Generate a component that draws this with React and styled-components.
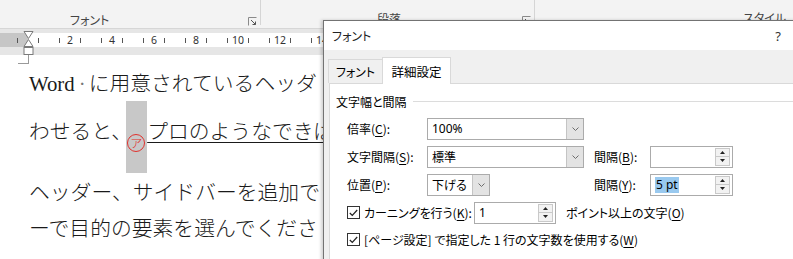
import React from 'react'
import styled, { createGlobalStyle, css } from 'styled-components'

const UI_FONT = `"Noto Sans CJK JP", "Noto Sans", sans-serif`

const GlobalStyle = createGlobalStyle`
  html, body {
    margin: 0;
    padding: 0;
    background: #fff;
  }
  body {
    width: 793px;
    height: 259px;
    overflow: hidden;
  }
`

const Screen = styled.div`
  position: relative;
  width: 793px;
  height: 259px;
  overflow: hidden;
  font-family: ${UI_FONT};
`

/* ---------- ribbon ---------- */

const Ribbon = styled.div`
  display: flex;
  height: 29px;
  box-sizing: border-box;
  background: #f3f3f3;
  border-bottom: 1px solid #d6d6d6;
`

const RibbonGroup = styled.div`
  display: flex;
  flex-direction: column;
  width: ${({ $w }) => ($w ? `${$w}px` : 'auto')};
  flex: ${({ $w }) => ($w ? 'none' : '1')};
  height: 25px;
  box-sizing: border-box;
  border-right: ${({ $last }) => ($last ? 'none' : '1px solid #d5d5d5')};
`

const Gallery = styled.div`
  height: 1px;
  margin-left: 9px;
  background: #c9c9c9;
`

const GroupFoot = styled.div`
  display: flex;
  align-items: center;
  margin-top: ${({ $top }) => $top}px;
  padding-left: ${({ $left }) => $left}px;
  padding-right: 3px;
  font-size: 12px;
  line-height: 16px;
  color: #444;
  font-feature-settings: "palt";
`

const Launcher = styled.svg`
  margin-left: auto;
  margin-top: 2px;
`

const DialogLauncher = () => (
  <Launcher width="9" height="9" viewBox="0 0 9 9">
    <path d="M0.5 8.5V0.5H8.5" fill="none" stroke="#8a8a8a" />
    <path d="M3 3L7.5 7.5M7.5 4.5V7.5H4.5" fill="none" stroke="#555" />
  </Launcher>
)

/* ---------- ruler ---------- */

const Ruler = styled.div`
  position: relative;
  height: 26px;
  padding-top: 4px;
  box-sizing: border-box;
  background: #e6e6e6;
`

const RulerStrip = styled.div`
  display: flex;
  height: 14px;
  padding-left: 1.75px;
  background: linear-gradient(to right, #c6c6c6 28px, #fff 28px);
`

const RulerCell = styled.div`
  flex: none;
  width: 10.5px;
  display: flex;
  align-items: center;
  justify-content: center;
  font-family: "Noto Sans", sans-serif;
  font-size: 10.5px;
  line-height: 14px;
  color: #333;
  white-space: nowrap;
`

const Tick = styled.span`
  display: block;
  width: 1px;
  height: 5px;
  background: #555;
`

const IndentMarker = styled.svg`
  position: absolute;
  left: 23px;
  top: 2px;
`

const rulerCells = Array.from({ length: 32 }, (_, i) => i - 2)

/* ---------- page ---------- */

const Page = styled.div`
  position: relative;
  z-index: 0;
  padding-left: 29px;
  font-family: "Liberation Serif", "Noto Sans CJK JP", serif;
  font-size: 20.8px;
  font-weight: 300;
  color: #1a1a1a;
`

const CropMark = styled.div`
  width: 10px;
  height: 8px;
  margin-left: -11px;
  border-right: 1px solid #9a9a9a;
  border-bottom: 1px solid #9a9a9a;
`

const TextLine = styled.div`
  height: 24px;
  line-height: 24px;
  margin-top: ${({ $top }) => $top}px;
  white-space: nowrap;
`

const SpaceMark = styled.span`
  color: #777;
  padding: 0 3px 0 4px;
`

const Marker = styled.span`
  position: relative;
  display: inline-block;
  width: 21px;
  height: 24px;
  margin-left: -6px;
  vertical-align: top;

  &::before {
    content: '';
    position: absolute;
    left: 0;
    right: 0;
    top: -19px;
    height: 72px;
    background: #c8c8c8;
    z-index: -1;
  }
`

const Circled = styled.span`
  position: absolute;
  left: 1px;
  top: 14px;
  width: 16px;
  height: 16px;
  border: 1px solid #e0312d;
  border-radius: 50%;
  display: flex;
  align-items: center;
  justify-content: center;
  color: #e0312d;
  font-family: ${UI_FONT};
  font-size: 12px;
  line-height: 1;
`

const Underlined = styled.span`
  text-decoration: underline;
  text-decoration-thickness: 1px;
  text-underline-offset: 3px;
`

/* ---------- dialog ---------- */

const Dialog = styled.div`
  position: absolute;
  left: 323px;
  top: 20px;
  z-index: 2;
  width: 490px;
  height: 260px;
  display: flex;
  flex-direction: column;
  background: #f0f0f0;
  border: 1px solid #737373;
  box-shadow: -2px 0 3px rgba(0, 0, 0, 0.18);
  font-size: 12px;
  font-feature-settings: "palt";
  color: #000;
`

const TitleBar = styled.div`
  display: flex;
  align-items: center;
  justify-content: space-between;
  height: 29px;
  padding: 0 33px 0 8px;
  background: #fff;
  font-size: 12px;
  color: #222;
`

const HelpMark = styled.span`
  font-family: "Noto Sans", sans-serif;
  font-size: 13px;
  color: #333;
`

const TabRow = styled.div`
  position: relative;
  z-index: 1;
  display: flex;
  align-items: flex-end;
  height: 34px;
  padding-left: 4px;
  margin-bottom: -1px;
`

const Tab = styled.div`
  display: flex;
  align-items: center;
  justify-content: center;
  box-sizing: border-box;
  border: 1px solid #d9d9d9;
  border-bottom: none;
  ${({ $active }) =>
    $active
      ? css`
          width: 69px;
          height: 27px;
          background: #fff;
          font-size: 12.5px;
        `
      : css`
          width: 54px;
          height: 24px;
          margin-bottom: 1px;
          border-right: none;
          background: #f0f0f0;
        `}
`

const Panel = styled.div`
  flex: 1;
  margin-left: 5px;
  padding-left: 6px;
  background: #fff;
  border: 1px solid #d9d9d9;
  border-right: none;
`

const GroupHeader = styled.div`
  display: flex;
  align-items: center;
  height: 16px;
  margin-top: 9px;

  &::after {
    content: '';
    flex: 1;
    height: 1px;
    margin-left: 6px;
    background: #dcdcdc;
  }
`

const Row = styled.div`
  display: flex;
  align-items: center;
  height: 23px;
  margin-left: 11px;
  margin-top: ${({ $top }) => $top}px;
  white-space: nowrap;
`

const Label = styled.span`
  flex: none;
  width: ${({ $w }) => ($w ? `${$w}px` : 'auto')};
  margin-left: ${({ $ml }) => $ml || 0}px;
`

const Key = styled.span`
  text-decoration: underline;
  text-underline-offset: 2px;
`

const FieldBox = styled.div`
  flex: none;
  display: flex;
  align-items: stretch;
  width: ${({ $w }) => $w}px;
  height: 22px;
  box-sizing: border-box;
  border: 1px solid #ababab;
  background: #fff;
`

const FieldText = styled.span`
  flex: 1;
  display: flex;
  align-items: center;
  padding-left: 4px;
  font-family: "Noto Sans", "Noto Sans CJK JP", sans-serif;
  font-size: 12px;
`

const DropButton = styled.span`
  width: 16px;
  display: flex;
  align-items: center;
  justify-content: center;
  background: #e3e3e3;
  border-left: 1px solid #c4c4c4;
`

const Spinner = styled.span`
  display: flex;
  flex-direction: column;
  justify-content: center;
  width: 15px;
  margin: 1px 2px 1px 0;
`

const SpinHalf = styled.span`
  display: flex;
  align-items: center;
  justify-content: center;
  height: 9px;
  background: #f2f2f2;
  border: 1px solid #c9c9c9;

  & + & {
    border-top: none;
  }
`

const Selected = styled.span`
  background: #99c9ef;
  padding: 1px 1px;
  line-height: 14px;
`

const Check = styled.span`
  flex: none;
  display: flex;
  align-items: center;
  justify-content: center;
  width: 13px;
  height: 13px;
  box-sizing: border-box;
  margin-right: 4px;
  border: 1px solid #333;
  background: #fff;
`

const Chevron = () => (
  <svg width="7" height="4" viewBox="0 0 7 4">
    <path d="M0.5 0.5L3.5 3.5L6.5 0.5" fill="none" stroke="#6d6d6d" />
  </svg>
)

const ComboBox = ({ width, value }) => (
  <FieldBox $w={width}>
    <FieldText>{value}</FieldText>
    <DropButton>
      <Chevron />
    </DropButton>
  </FieldBox>
)

const SpinBox = ({ width, children }) => (
  <FieldBox $w={width}>
    <FieldText>{children}</FieldText>
    <Spinner>
      <SpinHalf>
        <svg width="5" height="3" viewBox="0 0 5 3">
          <path d="M2.5 0L5 3H0Z" fill="#222" />
        </svg>
      </SpinHalf>
      <SpinHalf>
        <svg width="5" height="3" viewBox="0 0 5 3">
          <path d="M0 0H5L2.5 3Z" fill="#222" />
        </svg>
      </SpinHalf>
    </Spinner>
  </FieldBox>
)

const CheckBox = () => (
  <Check>
    <svg width="9" height="8" viewBox="0 0 9 8">
      <path d="M0.8 4L3.3 6.5L8.2 1" fill="none" stroke="#222" strokeWidth="1.2" />
    </svg>
  </Check>
)

const App = () => (
  <Screen>
    <GlobalStyle />
    <Ribbon>
      <RibbonGroup $w={261}>
        <GroupFoot $top={12} $left={70}>
          フォント
          <DialogLauncher />
        </GroupFoot>
      </RibbonGroup>
      <RibbonGroup $w={274}>
        <GroupFoot $top={11} $left={116}>
          段落
          <DialogLauncher />
        </GroupFoot>
      </RibbonGroup>
      <RibbonGroup $last>
        <Gallery />
        <GroupFoot $top={10} $left={208}>スタイル</GroupFoot>
      </RibbonGroup>
    </Ribbon>

    <Ruler>
      <RulerStrip>
        {rulerCells.map((k) => (
          <RulerCell key={k}>
            {k > 0 && k % 4 === 0 ? k / 2 : Math.abs(k % 2) === 1 ? <Tick /> : null}
          </RulerCell>
        ))}
      </RulerStrip>
      <IndentMarker width="11" height="24" viewBox="0 0 11 24">
        <path d="M1 0.5H10L5.5 7.5Z" fill="#fff" stroke="#7a7a7a" />
        <path d="M5.5 8.5L10 15.5H1Z" fill="#fff" stroke="#7a7a7a" />
        <rect x="1" y="16.5" width="9" height="7" fill="#fff" stroke="#7a7a7a" />
      </IndentMarker>
    </Ruler>

    <Page>
      <CropMark />
      <TextLine $top={8}>
        Word<SpaceMark>·</SpaceMark>に用意されているヘッダ
      </TextLine>
      <TextLine $top={24}>
        わせると、
        <Marker>
          <Circled>ア</Circled>
        </Marker>
        <Underlined>プロのようなできば</Underlined>
      </TextLine>
      <TextLine $top={37}>ヘッダー、サイドバーを追加でき</TextLine>
      <TextLine $top={12}>ーで目的の要素を選んでくださ</TextLine>
      <TextLine $top={12}>・</TextLine>
    </Page>

    <Dialog>
      <TitleBar>
        <span>フォント</span>
        <HelpMark>?</HelpMark>
      </TitleBar>
      <TabRow>
        <Tab>フォント</Tab>
        <Tab $active>詳細設定</Tab>
      </TabRow>
      <Panel>
        <GroupHeader>文字幅と間隔</GroupHeader>
        <Row $top={8}>
          <Label $w={80}>
            倍率(<Key>C</Key>):
          </Label>
          <ComboBox width={157} value="100%" />
        </Row>
        <Row $top={5}>
          <Label $w={80}>
            文字間隔(<Key>S</Key>):
          </Label>
          <ComboBox width={157} value="標準" />
          <Label $w={56} $ml={10}>
            間隔(<Key>B</Key>):
          </Label>
          <SpinBox width={83} />
        </Row>
        <Row $top={5}>
          <Label $w={80}>
            位置(<Key>P</Key>):
          </Label>
          <ComboBox width={63} value="下げる" />
          <Label $w={56} $ml={104}>
            間隔(<Key>Y</Key>):
          </Label>
          <SpinBox width={83}>
            <Selected>5 pt</Selected>
          </SpinBox>
        </Row>
        <Row $top={5}>
          <CheckBox />
          <Label $w={110}>
            カーニングを行う(<Key>K</Key>):
          </Label>
          <SpinBox width={82}>1</SpinBox>
          <Label $ml={10}>
            ポイント以上の文字(<Key>O</Key>)
          </Label>
        </Row>
        <Row $top={4}>
          <CheckBox />
          <Label>
            [ページ設定] で指定した 1 行の文字数を使用する(<Key>W</Key>)
          </Label>
        </Row>
      </Panel>
    </Dialog>
  </Screen>
)

export default App
